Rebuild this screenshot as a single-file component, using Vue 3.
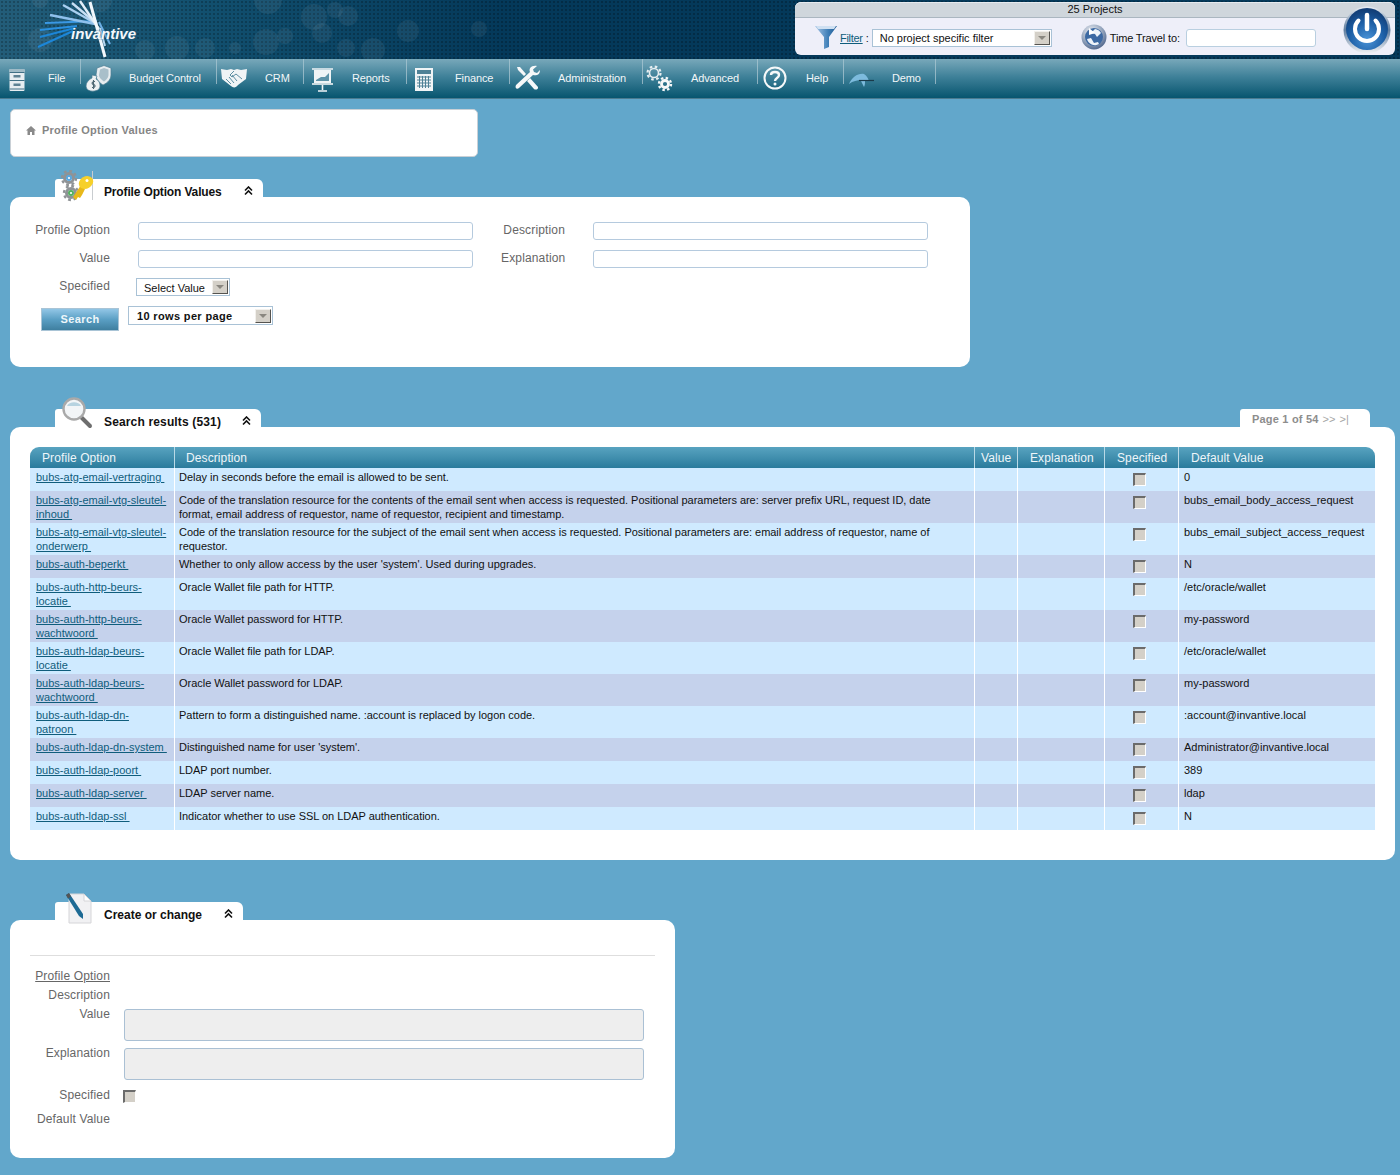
<template>
  <div class="page">
    <header class="top">
      <svg class="top-circles" width="700" height="59" aria-hidden="true">
        <circle v-for="(c, i) in circles" :key="i" :cx="c[0]" :cy="c[1]" :r="c[2]" fill="#fff" fill-opacity="0.06" />
      </svg>
      <div class="logo">
        <svg width="102" height="58" viewBox="0 0 102 58">
          <g fill="none" stroke-linecap="butt">
            <path d="M3 47 L38 31" stroke="#1c86d8" stroke-width="2" />
            <path d="M5 37 L40 28" stroke="#1c86d8" stroke-width="2" />
            <path d="M5 30 L42 26" stroke="#2a90e0" stroke-width="2" />
            <path d="M10 23 L62 21" stroke="#3a98e4" stroke-width="2" />
            <path d="M15 15 L60 24" stroke="#8fc0ec" stroke-width="2.400" />
            <path d="M28 5 L60 23" stroke="#a9cff0" stroke-width="2.400" />
            <path d="M37 3 L62 24" stroke="#c7def4" stroke-width="2.400" />
            <path d="M45 1 L64 29" stroke="#e2eef9" stroke-width="2.400" />
            <path d="M64 22 L75 44" stroke="#6fb0e6" stroke-width="2" />
            <path d="M65 28 L70 46" stroke="#b9d6ef" stroke-width="2" />
            <path d="M55 2 L70 57" stroke="#f2f7fc" stroke-width="3" />
          </g>
        </svg>
        <span class="logo-text">invantive</span>
      </div>
      <div class="panel">
        <div class="panel-head">25 Projects</div>
        <div class="panel-body">
          <svg class="filter-icon" width="22" height="24" viewBox="0 0 22 24">
            <defs>
              <linearGradient id="funnel" x1="0" x2="1" y1="0" y2="0">
                <stop offset="0" stop-color="#a8c6e6" />
                <stop offset="0.6" stop-color="#3f7fb8" />
                <stop offset="1" stop-color="#1f5a92" />
              </linearGradient>
            </defs>
            <path d="M0 1 H22 L14 12 V22 L9 24 V12 Z" fill="url(#funnel)" />
            <path d="M1 1 H21 L19 4 H3 Z" fill="#cfe0f2" />
          </svg>
          <a class="link filter-link">Filter</a>
          <span class="filter-colon">:</span>
          <div class="select filter-select">
            <span>No project specific filter</span>
            <i class="arrow"></i>
          </div>
          <svg class="time-icon" width="26" height="26" viewBox="0 0 26 26">
            <defs>
              <radialGradient id="globe" cx="0.4" cy="0.3" r="0.8">
                <stop offset="0" stop-color="#f2f4f8" />
                <stop offset="0.6" stop-color="#8a9cb6" />
                <stop offset="1" stop-color="#3e5680" />
              </radialGradient>
            </defs>
            <circle cx="13" cy="13" r="12.5" fill="url(#globe)" />
            <circle cx="13" cy="13" r="9" fill="#3d6aa3" />
            <path d="M14 5 a8 8 0 0 1 6 4 l-4 4 -2-3 -4-1z M6 15 l4-1 3 5 4-1 1 2 a8 8 0 0 1 -12-5z" fill="#eef3f9" />
            <path d="M8 4 L14 9 L8 11z" fill="#fff" />
          </svg>
          <span class="time-label">Time Travel to:</span>
          <div class="time-input"></div>
        </div>
        <svg class="power" width="48" height="48" viewBox="0 0 48 48">
          <defs>
            <radialGradient id="powerFill" cx="0.5" cy="0.75" r="0.7">
              <stop offset="0" stop-color="#4b94d8" />
              <stop offset="0.6" stop-color="#1c5ea5" />
              <stop offset="1" stop-color="#123f78" />
            </radialGradient>
            <linearGradient id="powerRim" x1="0" x2="0" y1="0" y2="1">
              <stop offset="0" stop-color="#e8edf2" />
              <stop offset="0.5" stop-color="#5f7d9f" />
              <stop offset="1" stop-color="#f1f3f6" />
            </linearGradient>
          </defs>
          <circle cx="24" cy="24" r="23.5" fill="url(#powerRim)" />
          <circle cx="24" cy="23" r="21" fill="url(#powerFill)" />
          <path d="M15.5 14.5 A12 12 0 1 0 32.5 14.5" fill="none" stroke="#fff" stroke-width="4" stroke-linecap="round" />
          <path d="M24 9 V23" stroke="#fff" stroke-width="4.500" stroke-linecap="round" />
        </svg>
      </div>
    </header>

    <nav class="nav">
      <a v-for="item in navItems" :key="item.label" class="nav-item" :style="{ width: `${item.width}px` }">
        <span class="nav-icon">
          <svg width="28" height="28" viewBox="0 0 28 28">
            <g v-if="item.icon === 'file'">
              <rect x="6.500" y="5" width="15" height="22" rx="1" fill="#e6edf1" />
              <rect x="6.500" y="5" width="15" height="3" fill="#9fbbc7" />
              <path d="M6.500 8.500 H21.500 M6.500 16.500 H21.500 M6.500 25 H21.500" stroke="#3f6f85" stroke-width="1" />
              <rect x="10.500" y="11" width="7" height="2.500" fill="#5d8193" />
              <rect x="10.500" y="19.500" width="7" height="2.500" fill="#5d8193" />
            </g>
            <g v-else-if="item.icon === 'budget'">
              <path d="M13 4 L20 1.500 L27 4 V11 C27 17 21 20 19 21 C16 19 12 16 12 11 Z" fill="#e8edf0" stroke="#4c7d92" stroke-width="0.7" />
              <path d="M16 5.500 L20 4 L24.500 5.500 V11 C24.500 14 21 17 20 17.500 C18 16 15 14 15 11 Z" fill="#a9bfca" />
              <path d="M8 11 L13 12 L12 15 C16 17 17 22 15 25 C12 28 4 28 2.500 24 C1 20 4 16 8 14 Z" fill="#eef1f2" stroke="#4c7d92" stroke-width="0.7" />
              <path d="M11 17.500 C8 17 7 20 9.500 20.500 C12 21 11.500 24 8 23.500 M9.500 16 V25" fill="none" stroke="#4b6470" stroke-width="1.100" />
            </g>
            <g v-else-if="item.icon === 'crm'">
              <path d="M1 5 L7 6 L11 5 L14 6 L17 5 L21 6 L27 5 L26 15 L18 21 C16 24 13 24 11 22 L2 15 Z" fill="#f0f4f6" />
              <path d="M6 15 L11 20 M9 13 L14 19 M12 11 L17 17 M14 7 L10 11 L12 13 L16 10 L22 15" fill="none" stroke="#4c8299" stroke-width="0.9" />
            </g>
            <g v-else-if="item.icon === 'reports'">
              <path d="M5 5 H26 M15.500 21 V26 M11 27 H20" stroke="#f0f4f6" stroke-width="1.600" fill="none" />
              <rect x="7" y="6" width="17" height="13" fill="#f0f4f6" />
              <path d="M9 16 L14 13 L18 13 L22 9 V17 H9 Z" fill="#5e93a8" />
              <path d="M5 20 H26" stroke="#f0f4f6" stroke-width="1.600" />
            </g>
            <g v-else-if="item.icon === 'finance'">
              <rect x="5" y="4" width="18" height="23" fill="#f0f4f6" />
              <rect x="7" y="6" width="14" height="4" fill="#4f8196" />
              <path d="M7 13 H21 M7 16 H21 M7 19 H21 M7 22 H21 M9.500 12 V24 M12.500 12 V24 M15.500 12 V24 M18.500 12 V24" stroke="#4f8196" stroke-width="1" />
            </g>
            <g v-else-if="item.icon === 'admin'">
              <path d="M4 3 L7 3 L13 10 L11 12 L5 6 Z M17 14 L25 23 C25.500 26 22 26 21 25 L14 17 Z" fill="#f6f8f9" />
              <path d="M24 2 L20 5.500 L21 8 L24 9 L27 6 C27 11 23 12 20 11 L6 24 C4 26 1.500 24 3 21 L17 8 C15.500 5 18 1 24 2 Z" fill="#f6f8f9" />
            </g>
            <g v-else-if="item.icon === 'advanced'">
              <g fill="none" stroke="#e6edf0">
                <circle cx="8" cy="9" r="4.500" stroke-width="1.600" />
                <circle cx="8" cy="9" r="6.500" stroke-width="2.200" stroke-dasharray="2.600 2.500" />
              </g>
              <g fill="none" stroke="#f6f8f9">
                <circle cx="19" cy="20" r="3.500" stroke-width="2.800" />
                <circle cx="19" cy="20" r="6" stroke-width="2.400" stroke-dasharray="2.400 2.300" />
              </g>
            </g>
            <g v-else-if="item.icon === 'help'">
              <circle cx="14" cy="14" r="10.500" fill="none" stroke="#f6f8f9" stroke-width="2" />
              <path d="M10 11 C10 7 18 7 18 11 C18 14 14 14 14 17" fill="none" stroke="#f6f8f9" stroke-width="2.400" />
              <circle cx="14" cy="20" r="1.500" fill="#f6f8f9" />
            </g>
            <g v-else>
              <path d="M2 20 C5 13 11 9 17 10 C20 12 21 14 22 17 L15 16 C10 16 6 17 2 20 Z" fill="#7dbbdd" />
              <path d="M14 17 C15 19 16 21 17 23 C18 21 18 19 18 17 Z" fill="#7dbbdd" />
              <path d="M12 16.500 H27" stroke="#1a3a4a" stroke-width="1.200" />
            </g>
          </svg>
        </span>
        <span class="nav-label">{{ item.label }}</span>
      </a>
    </nav>

    <main class="content">
      <div class="crumb">
        <svg width="10" height="9" viewBox="0 0 10 9"><path d="M5 0 L10 4.500 H8.500 V9 H6 V6 H4 V9 H1.500 V4.500 H0 Z" fill="#8a8a8a" /></svg>
        <span>Profile Option Values</span>
      </div>

      <section class="section">
        <div class="tab-row">
          <div class="tab tab-search">
            <svg class="tab-icon" width="34" height="32" viewBox="0 0 34 32">
              <path d="M32.500 1 V30" stroke="#c9cdd0" stroke-width="1" />
              <g fill="none" stroke="#8f9396">
                <circle cx="9" cy="8" r="4.500" stroke-width="3" />
                <circle cx="9" cy="8" r="7" stroke-width="2.400" stroke-dasharray="2.800 2.700" />
                <circle cx="11" cy="23" r="4.500" stroke-width="3" />
                <circle cx="11" cy="23" r="7" stroke-width="2.400" stroke-dasharray="2.800 2.700" />
              </g>
              <circle cx="9" cy="8" r="3" fill="#5aa8e0" />
              <circle cx="11" cy="23" r="3" fill="#52b060" />
              <circle cx="9" cy="8" r="1.100" fill="#fff" />
              <circle cx="11" cy="23" r="1.100" fill="#fff" />
              <path d="M21 15 L13 27 L16 30 L18 27 L20 28 L22 25 L25 19 Z" fill="#e8b81a" />
              <ellipse cx="26" cy="12.500" rx="7.500" ry="6" transform="rotate(-30 26 12.500)" fill="#f6d02a" />
              <circle cx="27" cy="10.500" r="1.500" fill="#fff" />
            </svg>
            <span>Profile Option Values</span>
            <svg class="chevrons" width="9" height="10" viewBox="0 0 9 10"><path d="M1 4.500 L4.500 1 L8 4.500 M1 8.500 L4.500 5 L8 8.500" /></svg>
          </div>
        </div>
        <div class="card card-search">
          <div class="search-grid">
            <label>Profile Option</label>
            <div class="input"></div>
            <label>Description</label>
            <div class="input"></div>
            <label>Value</label>
            <div class="input"></div>
            <label>Explanation</label>
            <div class="input"></div>
            <label>Specified</label>
            <div class="select specified-select">
              <span>Select Value</span>
              <i class="arrow"></i>
            </div>
          </div>
          <div class="search-actions">
            <button class="search-btn">Search</button>
            <div class="select rows-select">
              <span>10 rows per page</span>
              <i class="arrow"></i>
            </div>
          </div>
        </div>
      </section>

      <section class="section">
        <div class="tab-row">
          <div class="tab tab-results">
            <svg class="tab-icon" width="32" height="32" viewBox="0 0 32 32">
              <path d="M20 20 L29 29" stroke="#6e6e6e" stroke-width="4" stroke-linecap="round" />
              <circle cx="13" cy="12" r="10.500" fill="#f2f5f7" stroke="#a9a9a9" stroke-width="2.400" />
              <path d="M6 9 C8 4 18 4 20 9 Z" fill="#b7d3e0" />
            </svg>
            <span>Search results (531)</span>
            <svg class="chevrons" width="9" height="10" viewBox="0 0 9 10"><path d="M1 4.500 L4.500 1 L8 4.500 M1 8.500 L4.500 5 L8 8.500" /></svg>
          </div>
          <div class="tab tab-pager">
            <b>Page 1 of 54</b>
            <span>&gt;&gt;</span>
            <span>&gt;|</span>
          </div>
        </div>
        <div class="card card-results">
          <table class="results">
            <colgroup>
              <col style="width: 145px" />
              <col style="width: 800px" />
              <col style="width: 43px" />
              <col style="width: 87px" />
              <col style="width: 74px" />
              <col />
            </colgroup>
            <thead>
              <tr>
                <th>Profile Option</th>
                <th class="th-desc">Description</th>
                <th class="th-value">Value</th>
                <th>Explanation</th>
                <th>Specified</th>
                <th>Default Value</th>
              </tr>
            </thead>
            <tbody>
              <tr v-for="row in rows" :key="row.option">
                <td class="td-option"><a class="link">{{ row.option }}&nbsp;</a></td>
                <td class="td-desc">{{ row.description }}</td>
                <td></td>
                <td></td>
                <td class="td-check"><i class="check"></i></td>
                <td class="td-default">{{ row.value }}</td>
              </tr>
            </tbody>
          </table>
        </div>
      </section>

      <section class="section">
        <div class="tab-row">
          <div class="tab tab-edit">
            <svg class="tab-icon" width="28" height="32" viewBox="0 0 28 32">
              <path d="M3 2 H18 L25 9 V31 H3 Z" fill="#f1f1f3" stroke="#d5d5d8" />
              <path d="M18 2 V9 H25 Z" fill="#fff" stroke="#d5d5d8" />
              <path d="M0 3 L3 1 L17 22 L17 27 L13 24 Z" fill="#1d6a94" />
              <path d="M0 3 L3 1 L5 4.500 L2 6.500 Z" fill="#555" />
            </svg>
            <span>Create or change</span>
            <svg class="chevrons" width="9" height="10" viewBox="0 0 9 10"><path d="M1 4.500 L4.500 1 L8 4.500 M1 8.500 L4.500 5 L8 8.500" /></svg>
          </div>
        </div>
        <div class="card card-edit">
          <hr class="rule" />
          <div class="edit-grid">
            <label class="underlined">Profile Option</label>
            <div></div>
            <label>Description</label>
            <div></div>
            <label>Value</label>
            <div class="textarea"></div>
            <label>Explanation</label>
            <div class="textarea"></div>
            <label class="label-specified">Specified</label>
            <div class="edit-check"><i class="check"></i></div>
            <label class="label-default">Default Value</label>
            <div></div>
          </div>
        </div>
      </section>
    </main>
  </div>
</template>

<script setup>
const circles = [
  [314, 17, 13], [335, 10, 8], [348, 16, 10], [322, 33, 10], [408, 31, 11], [479, 29, 8],
  [266, 42, 13], [346, 48, 9], [373, 50, 12], [285, 36, 8], [177, 48, 12], [205, 48, 10],
  [145, 50, 10], [40, 40, 12], [100, 0, 12], [268, 0, 14], [40, 0, 8], [235, 48, 6],
];

const navItems = [
  { label: 'File', icon: 'file', width: 81 },
  { label: 'Budget Control', icon: 'budget', width: 136 },
  { label: 'CRM', icon: 'crm', width: 87 },
  { label: 'Reports', icon: 'reports', width: 103 },
  { label: 'Finance', icon: 'finance', width: 103 },
  { label: 'Administration', icon: 'admin', width: 133 },
  { label: 'Advanced', icon: 'advanced', width: 115 },
  { label: 'Help', icon: 'help', width: 86 },
  { label: 'Demo', icon: 'demo', width: 92 },
];

// the \n keeps the line break the original column has here
const rows = [
  { option: 'bubs-atg-email-vertraging', description: 'Delay in seconds before the email is allowed to be sent.', value: '0' },
  { option: 'bubs-atg-email-vtg-sleutel-inhoud', description: 'Code of the translation resource for the contents of the email sent when access is requested. Positional parameters are: server prefix URL, request ID, date format, email address of requestor, name of requestor, recipient and timestamp.', value: 'bubs_email_body_access_request' },
  { option: 'bubs-atg-email-vtg-sleutel-onderwerp', description: 'Code of the translation resource for the subject of the email sent when access is requested. Positional parameters are: email address of requestor, name of requestor.', value: 'bubs_email_subject_access_request' },
  { option: 'bubs-auth-beperkt', description: "Whether to only allow access by the user 'system'. Used during upgrades.", value: 'N' },
  { option: 'bubs-auth-http-beurs-locatie', description: 'Oracle Wallet file path for HTTP.', value: '/etc/oracle/wallet' },
  { option: 'bubs-auth-http-beurs-wachtwoord', description: 'Oracle Wallet password for HTTP.', value: 'my-password' },
  { option: 'bubs-auth-ldap-beurs-locatie', description: 'Oracle Wallet file path for LDAP.', value: '/etc/oracle/wallet' },
  { option: 'bubs-auth-ldap-beurs-wachtwoord', description: 'Oracle Wallet password for LDAP.', value: 'my-password' },
  { option: 'bubs-auth-ldap-dn-\npatroon', description: 'Pattern to form a distinguished name. :account is replaced by logon code.', value: ':account@invantive.local' },
  { option: 'bubs-auth-ldap-dn-system', description: "Distinguished name for user 'system'.", value: 'Administrator@invantive.local' },
  { option: 'bubs-auth-ldap-poort', description: 'LDAP port number.', value: '389' },
  { option: 'bubs-auth-ldap-server', description: 'LDAP server name.', value: 'ldap' },
  { option: 'bubs-auth-ldap-ssl', description: 'Indicator whether to use SSL on LDAP authentication.', value: 'N' },
];
</script>

<style>
body {
  background: #62a7cb;
}
</style>

<style scoped>
.page {
  font-family: "Liberation Sans", Arial, sans-serif;
  font-size: 11px;
  color: #111;
  min-height: 1175px;
  background: #62a7cb;
}

.top {
  position: relative;
  display: flex;
  justify-content: space-between;
  height: 59px;
  background-color: #04395a;
  background-image:
    radial-gradient(rgba(0, 0, 0, 0.22) 1px, transparent 1.2px),
    linear-gradient(90deg, #235d79 0, #12506f 200px, #04395a 500px);
  background-size: 4px 4px, 100% 100%;
}

.top-circles {
  position: absolute;
  left: 0;
  top: 0;
}

.logo {
  position: relative;
  margin-left: 35px;
  width: 102px;
  height: 58px;
}

.logo-text {
  position: absolute;
  left: 36px;
  top: 24px;
  font-size: 15px;
  line-height: 20px;
  font-weight: 700;
  font-style: italic;
  color: #f4f8fb;
  text-shadow: 0 0 2px #1d5a80;
}

.panel {
  position: relative;
  width: 600px;
  height: 53px;
  margin: 2px 5px 0 0;
  border-radius: 6px;
  background: #eeeff9;
}

.panel-head {
  height: 16px;
  box-sizing: border-box;
  line-height: 13px;
  text-align: center;
  background: #cfd6dc;
  border-top: 1px solid #e6eaee;
  border-bottom: 1px solid #aab6c0;
  border-radius: 6px 6px 0 0;
}

.panel-body {
  display: flex;
  align-items: center;
  height: 37px;
  padding-left: 20px;
}

.filter-icon {
  flex: none;
}

.filter-link {
  margin-left: 3px;
  margin-top: 3px;
  letter-spacing: -0.3px;
}

.filter-colon {
  margin: 3px 0 0 3px;
}

.filter-select {
  margin: 3px 0 0 3px;
  width: 180px;
}

.time-icon {
  margin: 1px 0 0 29px;
  flex: none;
}

.time-label {
  margin: 3px 0 0 3px;
  letter-spacing: -0.15px;
  white-space: nowrap;
}

.time-input {
  width: 130px;
  height: 18px;
  margin: 3px 0 0 6px;
  box-sizing: border-box;
  background: #fff;
  border: 1px solid #b9cfe0;
  border-radius: 3px;
}

.power {
  position: absolute;
  right: 4px;
  top: 4px;
}

.select {
  display: flex;
  align-items: center;
  justify-content: space-between;
  box-sizing: border-box;
  height: 18px;
  padding: 0 1px 0 7px;
  background: #fff;
  border: 1px solid #a9c2d6;
}

.arrow {
  position: relative;
  display: block;
  flex: none;
  width: 16px;
  height: 14px;
  box-sizing: border-box;
  background: #d4d0c8;
  border: 1px solid;
  border-color: #f2f0ec #55534f #55534f #f2f0ec;
}

.arrow::after {
  content: "";
  position: absolute;
  left: 3px;
  top: 4px;
  border: 4px solid transparent;
  border-top: 4px solid #8a8780;
  border-bottom: 0;
}

.nav {
  display: flex;
  height: 40px;
  box-sizing: border-box;
  background: linear-gradient(#78a8ba 0, #3f8199 45%, #07556f 100%);
  border-bottom: 1px solid #4b7b90;
}

.nav-item {
  display: flex;
  flex: none;
  align-items: center;
  height: 38px;
  color: #f2f6f8;
  background: linear-gradient(#9dc0cd, #8ab0bf) right top / 1px 25px no-repeat;
}

.nav-icon {
  display: flex;
  align-items: center;
  width: 48px;
  height: 28px;
  padding-left: 3px;
  box-sizing: border-box;
}

.nav-label {
  letter-spacing: -0.12px;
  white-space: nowrap;
}

.content {
  padding: 10px 5px 18px 10px;
}

.crumb {
  display: flex;
  align-items: flex-start;
  gap: 6px;
  width: 468px;
  height: 48px;
  box-sizing: border-box;
  padding: 14px 0 0 15px;
  background: #fff;
  border: 1px solid #c9d0d6;
  border-radius: 5px;
  color: #858585;
  font-weight: 700;
  line-height: 13px;
  letter-spacing: 0.25px;
}

.crumb svg {
  margin-top: 2px;
}

.section {
  margin-top: 42px;
}

.crumb + .section {
  margin-top: 22px;
}

.tab-row {
  display: flex;
  justify-content: space-between;
  margin: 0 25px 0 45px;
}

.tab {
  position: relative;
  display: flex;
  align-items: flex-start;
  box-sizing: border-box;
  height: 18px;
  padding: 6px 0 0 49px;
  line-height: 14px;
  background: #fff;
  border-radius: 3px 6px 0 0;
  font-size: 12px;
  font-weight: 700;
  color: #111;
}

.tab-icon {
  position: absolute;
}

.tab-search {
  width: 208px;
  letter-spacing: -0.15px;
}

.tab-search .tab-icon {
  left: 5px;
  top: -9px;
}

.tab-results {
  width: 206px;
  letter-spacing: 0.15px;
}

.tab-results .tab-icon {
  left: 6px;
  top: -12px;
}

.tab-edit {
  width: 188px;
}

.tab-edit .tab-icon {
  left: 11px;
  top: -10px;
}

.chevrons {
  position: absolute;
  right: 10px;
  top: 7px;
  fill: none;
  stroke: #111;
  stroke-width: 1.6;
}

.tab-pager {
  width: 130px;
  gap: 4px;
  padding: 3px 0 0 12px;
  font-size: 11px;
  color: #8d8d8d;
  letter-spacing: 0.2px;
}

.tab-pager span {
  font-weight: 400;
  color: #a5a5a5;
  letter-spacing: 0;
}

.card {
  background: #fff;
  border-radius: 10px;
}

.card-search {
  width: 960px;
  box-sizing: border-box;
  padding: 25px 0 36px;
}

label {
  display: block;
  font-size: 12px;
  line-height: 14px;
  letter-spacing: 0.15px;
  color: #666;
  text-align: right;
  white-space: nowrap;
}

.search-grid {
  display: grid;
  grid-template-columns: 100px 335px 64px 335px;
  column-gap: 28px;
  row-gap: 10px;
  align-items: start;
}

.search-grid label {
  padding-top: 1px;
  height: 18px;
  box-sizing: border-box;
}

.input {
  height: 18px;
  box-sizing: border-box;
  background: #fff;
  border: 1px solid #b5cade;
  border-radius: 3px;
}

.specified-select {
  width: 94px;
  margin-left: -2px;
}

.specified-select span {
  margin-right: 6px;
  padding-top: 1px;
}

.search-actions {
  display: flex;
  align-items: flex-start;
  gap: 9px;
  padding-left: 31px;
  margin-top: 10px;
}

.search-btn {
  display: block;
  width: 78px;
  height: 23px;
  margin-top: 2px;
  padding: 0 0 2px;
  border: 1px solid #a9c4d6;
  background: linear-gradient(#92c6e6, #5a9fc4 50%, #3f7f9f);
  font: 700 11px "Liberation Sans", Arial, sans-serif;
  letter-spacing: 0.4px;
  color: #eef6fa;
}

.rows-select {
  width: 145px;
  height: 19px;
  padding-left: 8px;
  font-weight: 700;
  letter-spacing: 0.35px;
}

.card-results {
  width: 1385px;
  box-sizing: border-box;
  padding: 20px;
  padding-bottom: 30px;
}

.results {
  width: 1345px;
  table-layout: fixed;
  border-collapse: separate;
  border-spacing: 0;
}

.results th {
  height: 21px;
  padding: 1px 0 0 12px;
  box-sizing: border-box;
  text-align: left;
  font-size: 12px;
  font-weight: 400;
  letter-spacing: 0.1px;
  color: #eef6fa;
  background: linear-gradient(#58a3c0, #2a7b9c);
  border-right: 1px solid #b9d9e6;
  white-space: nowrap;
}

.results th:first-child {
  border-top-left-radius: 9px;
}

.results th:last-child {
  border-top-right-radius: 9px;
  border-right: 0;
}

.results .th-desc {
  padding-left: 11px;
}

.results .th-value {
  padding-left: 6px;
}

.results td {
  height: 23px;
  box-sizing: border-box;
  padding: 2px 4px;
  vertical-align: top;
  line-height: 14px;
  border-right: 1px solid #fff;
  color: #111;
  background: #cfeaff;
}

.results tr:nth-child(even) td {
  background: #c5d2ec;
}

.results td:last-child {
  border-right: 0;
}

.results .td-option {
  padding-left: 6px;
  padding-right: 0;
  white-space: pre-line;
}

.results .td-desc {
  padding-right: 40px;
  letter-spacing: -0.03px;
}

.results .td-default {
  padding-left: 5px;
}

.results .td-check {
  padding: 5px 4px 0 0;
  text-align: center;
}

.link {
  color: #0f5d7c;
  text-decoration: underline;
}

.check {
  display: inline-block;
  width: 13px;
  height: 13px;
  box-sizing: border-box;
  vertical-align: top;
  background: #d4d0c8;
  border: 1px solid;
  border-width: 2px 1px 1px 2px;
  border-color: #6b6b6b #fff #fff #6b6b6b;
}

.card-edit {
  width: 665px;
  box-sizing: border-box;
  padding: 35px 20px 32px;
}

.rule {
  margin: 0 0 13px;
  height: 1px;
  border: 0;
  background: #dedede;
}

.edit-grid {
  display: grid;
  grid-template-columns: 80px 520px;
  column-gap: 14px;
  row-gap: 5px;
}

.underlined {
  text-decoration: underline;
}

.textarea {
  height: 32px;
  margin-top: 2px;
  box-sizing: border-box;
  background: #eeeeee;
  border: 1px solid #aac0d4;
  border-radius: 3px;
}

.label-specified {
  padding-top: 3px;
}

.label-default {
  padding-top: 4px;
}

.edit-check {
  margin: 5px 0 0 -1px;
  line-height: 0;
}
</style>
